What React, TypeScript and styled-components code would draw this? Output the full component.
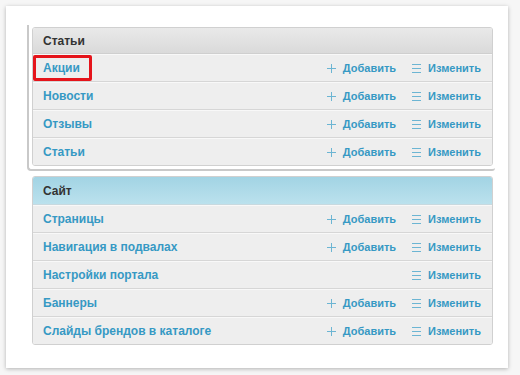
import styled, { createGlobalStyle, css } from 'styled-components';

const Global = createGlobalStyle`
  html, body {
    margin: 0;
    padding: 0;
    background: #f6f6f6;
  }
  body {
    font-family: 'Liberation Sans', Arial, sans-serif;
  }
`;

const Page = styled.div`
  width: 520px;
  height: 375px;
  padding: 6px 12px 0 6px;
  box-sizing: border-box;
`;

const Card = styled.div`
  background: #fff;
  height: 362px;
  box-sizing: border-box;
  padding: 19px 15px 0 21px;
  box-shadow: 0 1px 4px rgba(0, 0, 0, 0.28);
  display: flex;
  flex-direction: column;
  gap: 5px;
`;

const Stack = styled.div`
  padding: 2px 0 3px 3px;
  margin-right: -2px;
  border-left: 2px solid #c9c9c9;
  border-bottom: 2px solid #c9c9c9;
  border-bottom-left-radius: 4px;
  border-bottom-right-radius: 3px;
`;

const Module = styled.div<{ $shift?: boolean }>`
  border: 1px solid #d0d0d0;
  border-radius: 3px;
  overflow: hidden;
  margin-left: 5px;
  ${(p) =>
    p.$shift &&
    css`
      margin-left: 0;
      margin-right: 2px;
    `}
`;

const Header = styled.div<{ $blue?: boolean }>`
  height: 25px;
  display: flex;
  align-items: center;
  padding: 0 10px;
  font-size: 12px;
  font-weight: bold;
  color: #333;
  border-bottom: 1px solid #cfcfcf;
  background: linear-gradient(#e9e9e9, #dadada);
  ${(p) =>
    p.$blue &&
    css`
      height: 27px;
      background: linear-gradient(#a2d4e4, #bbe1ed);
      border-bottom-color: #c8d9df;
    `}
`;

const Row = styled.div`
  position: relative;
  height: 26px;
  display: flex;
  align-items: center;
  padding: 0 11px 0 10px;
  background: #eeeeee;
  border-top: 1px solid #f8f8f8;
  border-bottom: 1px solid #d6d6d6;
  &:last-child {
    border-bottom: none;
  }
`;

const Name = styled.span`
  flex: 1;
  font-size: 12px;
  font-weight: bold;
  color: #3699c4;
`;

const Action = styled.span`
  display: inline-flex;
  align-items: center;
  gap: 7px;
  margin-left: 16px;
  font-size: 11px;
  font-weight: bold;
  color: #3699c4;
`;

const Icon = styled.svg`
  width: 9px;
  height: 9px;
  stroke: #6cb5d3;
  stroke-width: 1;
  fill: none;
`;

const Marker = styled.div`
  position: absolute;
  left: 0;
  top: 0;
  width: 59px;
  height: 26px;
  box-sizing: border-box;
  border: 3px solid #e5141b;
  border-radius: 2px;
`;

const PlusIcon = () => (
  <Icon viewBox="0 0 9 9">
    <path d="M0 4.5H9M4.5 0V9" />
  </Icon>
);

const ListIcon = () => (
  <Icon viewBox="0 0 9 9">
    <path d="M0 0.5H9M0 4.5H9M0 8.5H9" />
  </Icon>
);

type Item = { name: string; add: boolean };

const articles: Item[] = [
  { name: 'Акции', add: true },
  { name: 'Новости', add: true },
  { name: 'Отзывы', add: true },
  { name: 'Статьи', add: true },
];

const site: Item[] = [
  { name: 'Страницы', add: true },
  { name: 'Навигация в подвалах', add: true },
  { name: 'Настройки портала', add: false },
  { name: 'Баннеры', add: true },
  { name: 'Слайды брендов в каталоге', add: true },
];

function Rows({ items, mark }: { items: Item[]; mark?: string }) {
  return (
    <>
      {items.map((it) => (
        <Row key={it.name}>
          {mark === it.name && <Marker />}
          <Name>{it.name}</Name>
          {it.add && (
            <Action>
              <PlusIcon />
              Добавить
            </Action>
          )}
          <Action>
            <ListIcon />
            Изменить
          </Action>
        </Row>
      ))}
    </>
  );
}

export default function App() {
  return (
    <Page>
      <Global />
      <Card>
        <Stack>
          <Module $shift>
            <Header>Статьи</Header>
            <Rows items={articles} mark="Акции" />
          </Module>
        </Stack>
        <Module>
          <Header $blue>Сайт</Header>
          <Rows items={site} />
        </Module>
      </Card>
    </Page>
  );
}
